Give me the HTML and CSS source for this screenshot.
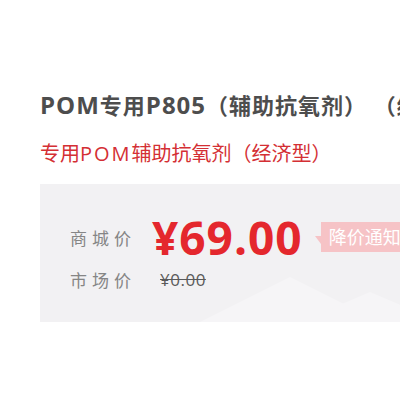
FILE: index.html
```html
<!DOCTYPE html>
<html lang="zh">
<head>
<meta charset="utf-8">
<link rel="stylesheet" href="styles.css">
</head>
<body>
<div class="page">
  <h1 class="title"><span class="latin">POM</span>专用<span class="latin">P805</span>（辅助抗氧剂） （经济型）</h1>
  <p class="subtitle">专用<span class="latin">POM</span>辅助抗氧剂（经济型）</p>
  <div class="pricebox">
    <div class="deco deco1"></div>
    <div class="deco deco2"></div>
    <div class="row row-main">
      <span class="label">商城价</span>
      <span class="price">¥69.00</span>
      <span class="notify">降价通知</span>
    </div>
    <div class="row row-market">
      <span class="label">市场价</span>
      <span class="old">¥0.00</span>
    </div>
  </div>
</div>
</body>
</html>
```

FILE: styles.css
```css
html, body {
  margin: 0;
  padding: 0;
  background: #fff;
  overflow: hidden;
}
body {
  width: 400px;
  height: 400px;
  font-family: "Open Sans", "Noto Sans CJK SC", sans-serif;
  text-spacing-trim: space-all;
}
.page {
  padding: 89px 0 0 40px;
  width: 600px;
}
.title {
  margin: 0;
  font-size: 22px;
  line-height: 32px;
  font-weight: 700;
  color: #4d4d4d;
  letter-spacing: 1px;
  white-space: nowrap;
}
.title .latin {
  font-size: 24px;
}
.subtitle {
  margin: 20px 0 0 0;
  font-size: 20px;
  line-height: 26px;
  color: #d42f34;
  white-space: nowrap;
}
.subtitle .latin {
  letter-spacing: 2px;
}
.pricebox {
  position: relative;
  overflow: hidden;
  margin-top: 17px;
  height: 138px;
  background: #f2f1f3;
  padding: 28px 0 0 30px;
  box-sizing: border-box;
}
.deco {
  position: absolute;
  background: #f6f5f7;
}
.deco1 {
  left: 160px;
  bottom: 0;
  width: 180px;
  height: 45px;
  clip-path: polygon(0 100%, 50% 0, 100% 100%);
}
.deco2 {
  left: 260px;
  bottom: 0;
  width: 140px;
  height: 30px;
  clip-path: polygon(0 100%, 50% 0, 100% 100%);
}
.row {
  position: relative;
  display: flex;
  align-items: center;
}
.row-main {
  height: 50px;
}
.label {
  width: 82px;
  font-size: 17px;
  letter-spacing: 5px;
  color: #858585;
}
.price {
  font-size: 46px;
  font-weight: 700;
  color: #e4272d;
  line-height: 50px;
  letter-spacing: 1px;
}
.notify {
  position: relative;
  margin-left: 18px;
  height: 30px;
  line-height: 30px;
  padding: 0 8px;
  background: #f6c3c6;
  color: #fff;
  font-size: 18px;
  white-space: nowrap;
}
.notify::before {
  content: "";
  position: absolute;
  left: -6px;
  top: 14px;
  border-style: solid;
  border-width: 0 6px 8px 0;
  border-color: transparent #f6c3c6 transparent transparent;
}
.row-market {
  height: 34px;
}
.row-market .label {
  width: 90px;
}
.old {
  font-size: 17px;
  color: #5a5a5a;
  letter-spacing: 0.5px;
  text-decoration: line-through;
}
```
